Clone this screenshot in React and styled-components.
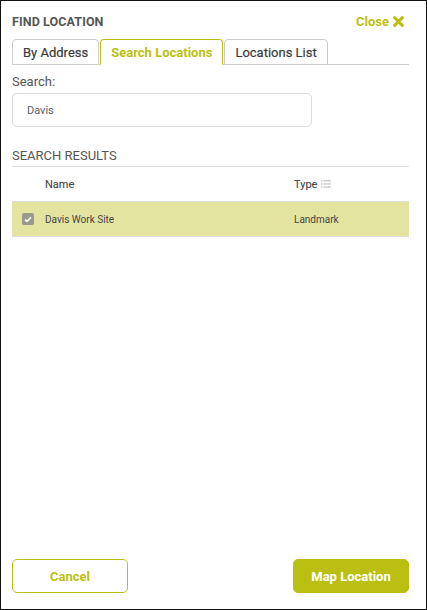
import React from "react";
import styled, { createGlobalStyle } from "styled-components";

const olive = "#bbbf12";

const Global = createGlobalStyle`
  html, body { margin: 0; padding: 0; background: #fff; }
  body { font-family: Roboto, "Noto Sans", sans-serif; }
  * { box-sizing: border-box; }
`;

const Panel = styled.div`
  width: 427px;
  height: 610px;
  border: 1px solid #111;
  display: flex;
  flex-direction: column;
  padding: 0 17px 16px 11px;
  background: #fff;
`;

const Header = styled.div`
  display: flex;
  justify-content: space-between;
  align-items: center;
  height: 38px;
  padding-top: 3px;
  padding-right: 5px;
`;

const Title = styled.div`
  font-size: 12.5px;
  font-weight: 700;
  color: #555;
  letter-spacing: 0.1px;
`;

const Close = styled.button`
  border: 0;
  background: none;
  padding: 0;
  font-family: inherit;
  font-size: 13px;
  font-weight: 700;
  color: ${olive};
  display: flex;
  align-items: center;
  gap: 4px;
  cursor: pointer;
`;

const Tabs = styled.div`
  display: flex;
  height: 26px;
  border-bottom: 1px solid #ccc;
  gap: 1px;
`;

const Tab = styled.div`
  height: 26px;
  margin-bottom: -1px;
  padding: 0 ${(p) => p.$px}px;
  border: 1px solid ${(p) => (p.$active ? olive : "#ccc")};
  border-bottom: ${(p) => (p.$active ? "1px solid #fff" : "1px solid #ccc")};
  border-radius: 4px 4px 0 0;
  display: flex;
  align-items: center;
  font-size: 13px;
  font-weight: ${(p) => (p.$active ? 700 : 400)};
  color: ${(p) => (p.$active ? olive : "#3a3a3a")};
  background: #fff;
  -webkit-text-stroke: ${(p) => (p.$active ? "0" : "0.2px #3a3a3a")};
`;

const Label = styled.div`
  font-size: 13px;
  color: #555;
  margin-top: 9px;
  height: 16px;
`;

const Input = styled.div`
  margin-top: 3px;
  width: 300px;
  height: 34px;
  border: 1px solid #ddd;
  border-radius: 5px;
  display: flex;
  align-items: center;
  padding-left: 14px;
  font-size: 11px;
  color: #5c5c6e;
`;

const Section = styled.div`
  margin-top: 21px;
  font-size: 13px;
  color: #555;
  padding-bottom: 3px;
  border-bottom: 1px solid #ddd;
`;

const Row = styled.div`
  display: grid;
  grid-template-columns: 33px 249px 1fr;
  align-items: center;
  height: ${(p) => (p.$head ? 34 : 36)}px;
  background: ${(p) => (p.$selected ? "#e3e4a0" : "transparent")};
  border-top: ${(p) => (p.$selected ? "1px solid #ddd" : "none")};
  border-bottom: ${(p) => (p.$selected ? "1px solid #ddd" : "none")};
  font-size: ${(p) => (p.$head ? 11 : 10)}px;
  font-weight: 400;
  color: #444;
  -webkit-text-stroke: ${(p) => (p.$head ? "0.1px #444" : "0")};
`;

const Cell = styled.div`
  display: flex;
  align-items: center;
  gap: 4px;
`;

const Check = styled.div`
  width: 12px;
  height: 12px;
  margin-left: 10px;
  background: #9a9a8a;
  border-radius: 2px;
  display: flex;
  align-items: center;
  justify-content: center;
`;

const Spacer = styled.div`
  flex: 1;
`;

const Footer = styled.div`
  display: flex;
  justify-content: space-between;
`;

const Button = styled.button`
  width: 116px;
  height: 34px;
  border-radius: 5px;
  border: 1px solid ${olive};
  background: ${(p) => (p.$primary ? olive : "#fff")};
  color: ${(p) => (p.$primary ? "#fff" : olive)};
  font-family: inherit;
  font-size: 13px;
  font-weight: 700;
  cursor: pointer;
`;

const ListIcon = () => (
  <svg width="10" height="8" viewBox="0 0 10 8">
    <g fill="#ccc">
      <rect x="0" y="0" width="1.5" height="1.5" />
      <rect x="2.5" y="0" width="7.5" height="1.5" />
      <rect x="0" y="3.2" width="1.5" height="1.5" />
      <rect x="2.5" y="3.2" width="7.5" height="1.5" />
      <rect x="0" y="6.4" width="1.5" height="1.5" />
      <rect x="2.5" y="6.4" width="7.5" height="1.5" />
    </g>
  </svg>
);

export default function App() {
  return (
    <>
      <Global />
      <Panel>
        <Header>
          <Title>FIND LOCATION</Title>
          <Close>
            Close
            <svg width="11" height="11" viewBox="0 0 10 10">
              <path d="M1.5 1.5 L8.5 8.5 M8.5 1.5 L1.5 8.5" stroke={olive} strokeWidth="2.8" strokeLinecap="round" />
            </svg>
          </Close>
        </Header>
        <Tabs>
          <Tab $px={10}>By Address</Tab>
          <Tab $active $px={10}>Search Locations</Tab>
          <Tab $px={10}>Locations List</Tab>
        </Tabs>
        <Label>Search:</Label>
        <Input>Davis</Input>
        <Section>SEARCH RESULTS</Section>
        <Row $head>
          <div />
          <Cell>Name</Cell>
          <Cell>
            Type <ListIcon />
          </Cell>
        </Row>
        <Row $selected>
          <Cell>
            <Check>
              <svg width="8" height="7" viewBox="0 0 8 7">
                <path d="M1 3.6 L3 5.4 L7 1.3" stroke="#fff" strokeWidth="1.6" fill="none" />
              </svg>
            </Check>
          </Cell>
          <Cell>Davis Work Site</Cell>
          <Cell>Landmark</Cell>
        </Row>
        <Spacer />
        <Footer>
          <Button>Cancel</Button>
          <Button $primary>Map Location</Button>
        </Footer>
      </Panel>
    </>
  );
}
